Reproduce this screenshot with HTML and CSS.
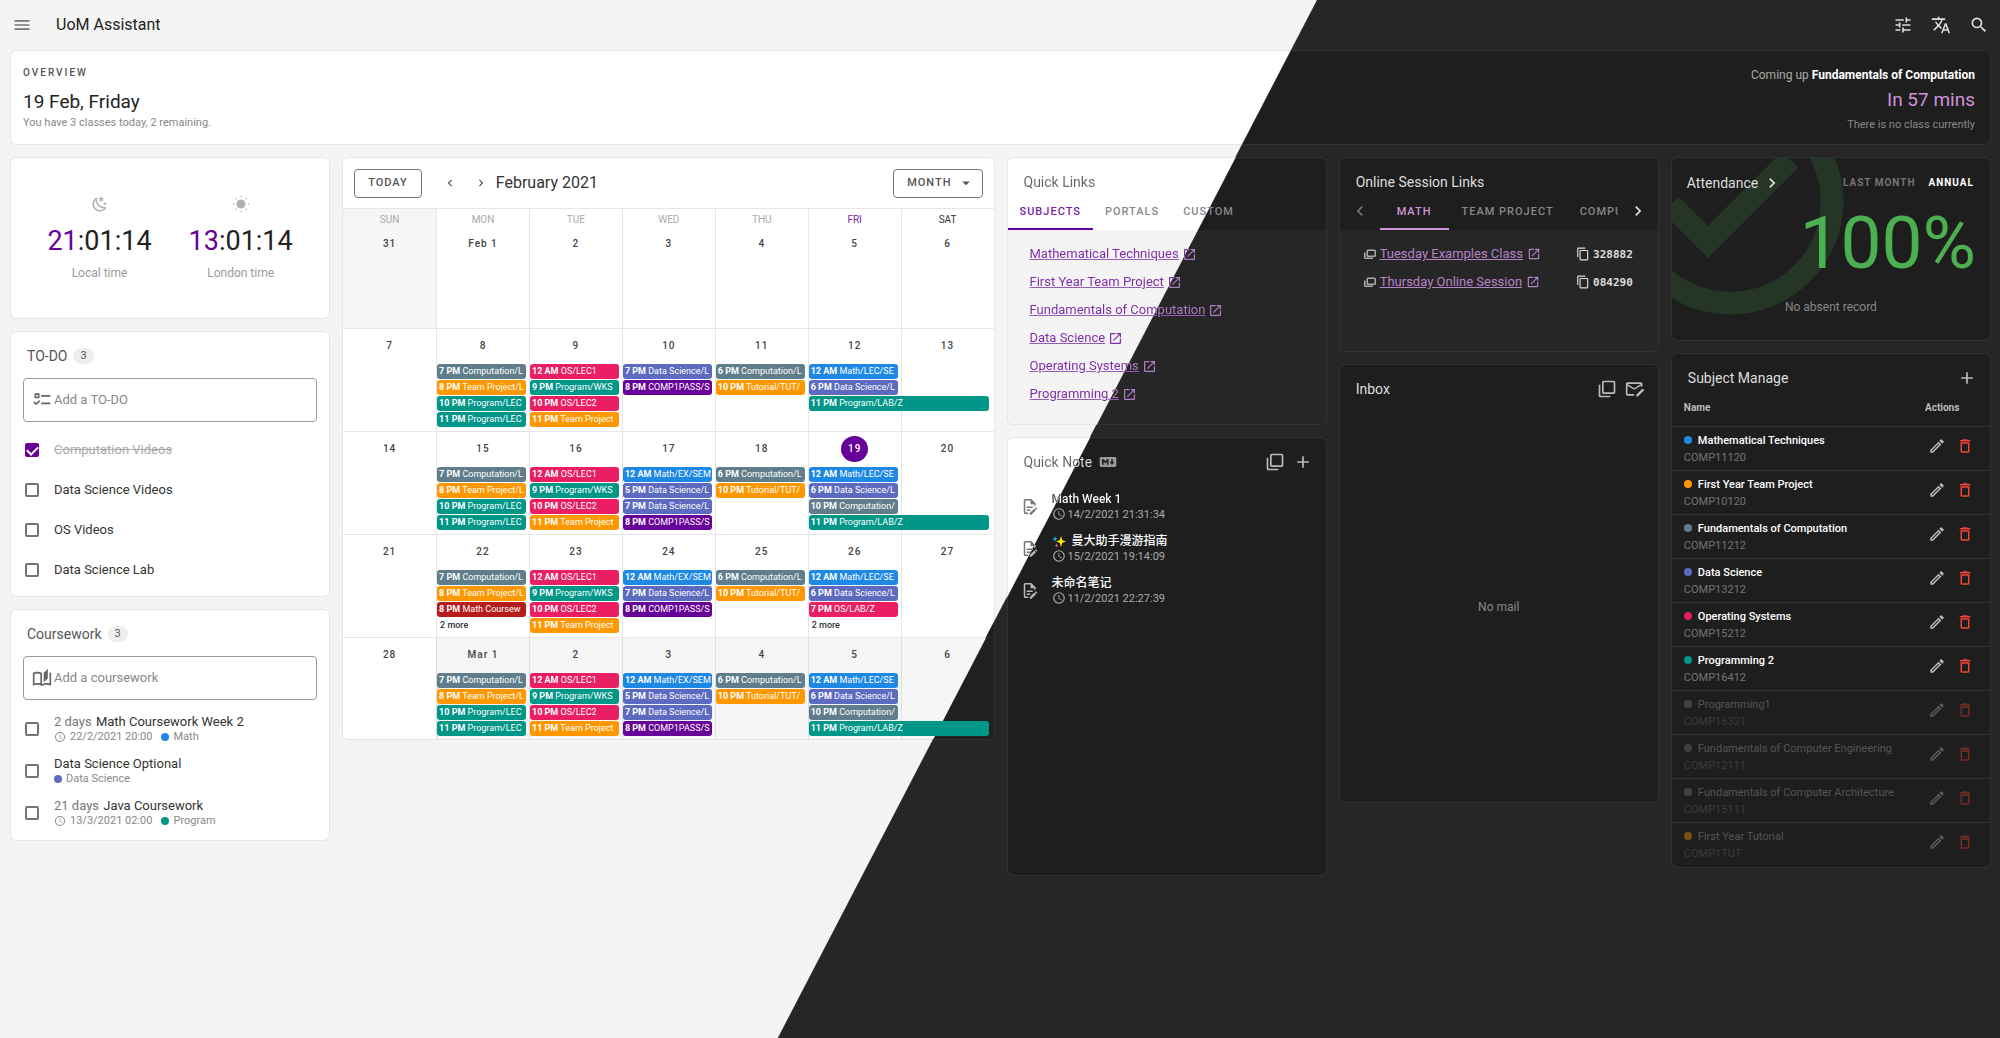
FILE: index.html
```html
<!DOCTYPE html>
<html lang="en">
<head>
<meta charset="utf-8">
<meta name="viewport" content="width=device-width, initial-scale=1">
<title>UoM Assistant</title>
<link rel="stylesheet" href="styles.css">
</head>
<body>
<svg class="sprite" aria-hidden="true">
  <symbol id="menu" viewBox="0 0 24 24"><path d="M3,6H21V8H3V6M3,11H21V13H3V11M3,16H21V18H3V16Z"/></symbol>
  <symbol id="tune" viewBox="0 0 24 24"><path d="M3,17V19H9V17H3M3,5V7H13V5H3M13,21V19H21V17H13V15H11V21H13M7,9V11H3V13H7V15H9V9H7M21,13V11H11V13H21M15,9H17V7H21V5H17V3H15V9Z"/></symbol>
  <symbol id="translate" viewBox="0 0 24 24"><path d="M12.87,15.07L10.33,12.56L10.36,12.53C12.1,10.59 13.34,8.36 14.07,6H17V4H10V2H8V4H1V6H12.17C11.5,7.92 10.44,9.75 9,11.35C8.07,10.32 7.3,9.19 6.69,8H4.69C5.42,9.63 6.42,11.17 7.67,12.56L2.58,17.58L4,19L9,14L12.11,17.11L12.87,15.07M18.5,10H16.5L12,22H14L15.12,19H19.87L21,22H23L18.5,10M15.88,17L17.5,12.67L19.12,17H15.88Z"/></symbol>
  <symbol id="magnify" viewBox="0 0 24 24"><path d="M9.5,3A6.5,6.5 0 0,1 16,9.5C16,11.11 15.41,12.59 14.44,13.73L14.71,14H15.5L20.5,19L19,20.5L14,15.5V14.71L13.73,14.44C12.59,15.41 11.11,16 9.5,16A6.5,6.5 0 0,1 3,9.5A6.5,6.5 0 0,1 9.5,3M9.5,5C7,5 5,7 5,9.5C5,12 7,14 9.5,14C12,14 14,12 14,9.5C14,7 12,5 9.5,5Z"/></symbol>
  <symbol id="night" viewBox="0 0 24 24"><path d="M17.75,4.09L15.22,6.03L16.13,9.09L13.5,7.28L10.87,9.09L11.78,6.03L9.25,4.09L12.44,4L13.5,1L14.56,4L17.75,4.09M21.25,11L19.61,12.25L20.2,14.23L18.5,13.06L16.8,14.23L17.39,12.25L15.75,11L17.81,10.95L18.5,9L19.19,10.95L21.25,11M18.97,15.95C19.8,15.87 20.69,17.05 20.16,17.8C19.84,18.25 19.5,18.67 19.08,19.07C15.17,23 8.84,23 4.94,19.07C1.03,15.17 1.03,8.83 4.94,4.93C5.34,4.53 5.76,4.17 6.21,3.85C6.96,3.32 8.14,4.21 8.06,5.04C7.79,7.9 8.75,10.87 10.95,13.06C13.14,15.26 16.1,16.22 18.97,15.95M17.33,17.97C14.5,17.81 11.7,16.64 9.53,14.5C7.36,12.31 6.2,9.5 6.04,6.68C3.23,9.82 3.34,14.64 6.35,17.66C9.37,20.67 14.19,20.78 17.33,17.97Z"/></symbol>
  <symbol id="sun" viewBox="0 0 24 24"><circle cx="12" cy="12" r="6"/><circle cx="12" cy="2" r="1"/><circle cx="12" cy="22" r="1"/><circle cx="2" cy="12" r="1"/><circle cx="22" cy="12" r="1"/><circle cx="5" cy="5" r="1"/><circle cx="19" cy="5" r="1"/><circle cx="5" cy="19" r="1"/><circle cx="19" cy="19" r="1"/></symbol>
  <symbol id="open" viewBox="0 0 24 24"><path d="M14,3V5H17.59L7.76,14.83L9.17,16.24L19,6.41V10H21V3M19,19H5V5H12V3H5C3.89,3 3,3.9 3,5V19A2,2 0 0,0 5,21H19A2,2 0 0,0 21,19V12H19V19Z"/></symbol>
  <symbol id="left" viewBox="0 0 24 24"><path d="M15.41,16.58L10.83,12L15.41,7.41L14,6L8,12L14,18L15.41,16.58Z"/></symbol>
  <symbol id="right" viewBox="0 0 24 24"><path d="M8.59,16.58L13.17,12L8.59,7.41L10,6L16,12L10,18L8.59,16.58Z"/></symbol>
  <symbol id="plus" viewBox="0 0 24 24"><path d="M19,13H13V19H11V13H5V11H11V5H13V11H19V13Z"/></symbol>
  <symbol id="down" viewBox="0 0 24 24"><path d="M7,10L12,15L17,10H7Z"/></symbol>
  <symbol id="pencil" viewBox="0 0 24 24"><path d="M14.06,9L15,9.94L5.92,19H5V18.08L14.06,9M17.66,3C17.41,3 17.15,3.1 16.96,3.29L15.13,5.12L18.88,8.87L20.71,7.04C21.1,6.65 21.1,6 20.71,5.63L18.37,3.29C18.17,3.09 17.92,3 17.66,3M14.06,6.19L3,17.25V21H6.75L17.81,9.94L14.06,6.19Z"/></symbol>
  <symbol id="trash" viewBox="0 0 24 24"><path d="M6,19A2,2 0 0,0 8,21H16A2,2 0 0,0 18,19V7H6V19M8,9H16V19H8V9M15.5,4L14.5,3H9.5L8.5,4H5V6H19V4H15.5Z"/></symbol>
  <symbol id="clock" viewBox="0 0 24 24"><path d="M12,20A8,8 0 0,0 20,12A8,8 0 0,0 12,4A8,8 0 0,0 4,12A8,8 0 0,0 12,20M12,2A10,10 0 0,1 22,12A10,10 0 0,1 12,22C6.47,22 2,17.5 2,12A10,10 0 0,1 12,2M12.5,7V12.25L17,14.92L16.25,16.15L11,13V7H12.5Z"/></symbol>
  <symbol id="copy" viewBox="0 0 24 24"><path d="M19,21H8V7H19M19,5H8A2,2 0 0,0 6,7V21A2,2 0 0,0 8,23H19A2,2 0 0,0 21,21V7A2,2 0 0,0 19,5M16,1H4A2,2 0 0,0 2,3V17H4V3H16V1Z"/></symbol>
  <symbol id="stack" viewBox="0 0 24 24"><path d="M20,16V4H8V16H20M22,16A2,2 0 0,1 20,18H8C6.89,18 6,17.1 6,16V4C6,2.89 6.89,2 8,2H20A2,2 0 0,1 22,4V16M16,20V22H4A2,2 0 0,1 2,20V7H4V20H16Z"/></symbol>
  <symbol id="session" viewBox="0 0 24 24"><path d="M8,3H21A3,3 0 0,1 24,6V15A3,3 0 0,1 21,18H8A3,3 0 0,1 5,15V6A3,3 0 0,1 8,3M8,6V15H21V6H8M0,9H3V19H18V22H3A3,3 0 0,1 0,19V9Z"/></symbol>
  <symbol id="mail-edit" viewBox="0 0 24 24"><path d="M3,4H19A2,2 0 0,1 21,6V9H19V8L11,13L3,8V18H11V20H3A2,2 0 0,1 1,18V6A2,2 0 0,1 3,4M3,6L11,11L19,6H3M21,11.5L23,13.5L15.5,21H13.5V19L21,11.5Z"/></symbol>
  <symbol id="markdown" viewBox="0 0 24 24"><path d="M20.56 18H3.44C2.65 18 2 17.37 2 16.59V7.41C2 6.63 2.65 6 3.44 6H20.56C21.35 6 22 6.63 22 7.41V16.59C22 17.37 21.35 18 20.56 18M6.81 15.19V11.53L8.73 13.88L10.65 11.53V15.19H12.58V8.81H10.65L8.73 11.16L6.81 8.81H4.89V15.19H6.81M19.69 12H17.77V8.81H15.85V12H13.92L16.81 15.28L19.69 12Z"/></symbol>
  <symbol id="todo" viewBox="0 0 24 24"><path d="M3,4H9V10H3V4M5,6V8H7V6H5M11,6H22V8H11V6M11,15H22V17H11V15M8.600,12L10,13.400L5,18.400L1.600,15L3,13.600L5,15.600L8.600,12Z"/></symbol>
  <symbol id="book" viewBox="0 0 24 24"><path d="M19 1L14 6V17L19 12.5V1M21 5V18.5C19.9 18.15 18.7 18 17.5 18C15.8 18 13.35 18.65 12 19.5V6C10.55 4.9 8.45 4.5 6.5 4.5C4.55 4.5 2.45 4.9 1 6V20.65C1 20.9 1.25 21.15 1.5 21.15C1.6 21.15 1.65 21.1 1.75 21.1C3.1 20.45 5.05 20 6.5 20C8.45 20 10.55 20.4 12 21.5C13.35 20.65 15.8 20 17.5 20C19.15 20 20.85 20.3 22.25 21.05C22.35 21.1 22.4 21.1 22.5 21.1C22.75 21.1 23 20.85 23 20.6V6C22.4 5.55 21.75 5.25 21 5M10 18.41C8.75 18.09 7.5 18 6.5 18C5.44 18 4.18 18.19 3 18.5V7.13C3.91 6.73 5.14 6.5 6.5 6.5C7.86 6.5 9.09 6.73 10 7.13V18.41Z"/></symbol>
  <symbol id="check-circle" viewBox="0 0 24 24"><path d="M12 2C6.5 2 2 6.5 2 12S6.5 22 12 22 22 17.5 22 12 17.5 2 12 2M12 20C7.59 20 4 16.41 4 12S7.59 4 12 4 20 7.59 20 12 16.41 20 12 20M16.59 7.58L10 14.17L7.41 11.59L6 13L10 17L18 9L16.59 7.58Z"/></symbol>
</svg>

<header class="appbar">
  <button class="icon-btn muted" aria-label="Menu"><svg class="ic20"><use href="#menu"/></svg></button>
  <h1>UoM Assistant</h1>
  <div class="tools">
    <button class="icon-btn" aria-label="Settings"><svg class="ic20"><use href="#tune"/></svg></button>
    <button class="icon-btn" aria-label="Language"><svg class="ic20"><use href="#translate"/></svg></button>
    <button class="icon-btn" aria-label="Search"><svg class="ic20"><use href="#magnify"/></svg></button>
  </div>
</header>

<main>
  <section class="card overview">
    <div class="today">
      <p class="overline">OVERVIEW</p>
      <h2>19 Feb, Friday</h2>
      <p class="sub">You have 3 classes today, 2 remaining.</p>
    </div>
    <div class="next">
      <p class="coming">Coming up <b>Fundamentals of Computation</b></p>
      <p class="countdown">In 57 mins</p>
      <p class="now">There is no class currently</p>
    </div>
  </section>

  <div class="board">
    <div class="col">
      <section class="card clocks">
        <div class="clock"><svg class="ic18"><use href="#night"/></svg><time><b>21</b>:01:14</time><span>Local time</span></div>
        <div class="clock"><svg class="ic18"><use href="#sun"/></svg><time><b>13</b>:01:14</time><span>London time</span></div>
      </section>

      <section class="card tasks">
        <h3>TO-DO <span class="count">3</span></h3>
        <div class="field"><svg class="ic20"><use href="#todo"/></svg><input type="text" aria-label="Add a TO-DO" placeholder="Add a TO-DO"></div>
        <label class="task done"><input type="checkbox" checked><span>Computation Videos</span></label>
        <label class="task"><input type="checkbox"><span>Data Science Videos</span></label>
        <label class="task"><input type="checkbox"><span>OS Videos</span></label>
        <label class="task"><input type="checkbox"><span>Data Science Lab</span></label>
      </section>

      <section class="card tasks works">
        <h3>Coursework <span class="count">3</span></h3>
        <div class="field"><svg class="ic20"><use href="#book"/></svg><input type="text" aria-label="Add a coursework" placeholder="Add a coursework"></div>
        <label class="work"><input type="checkbox"><span class="lines"><span><i>2 days</i> Math Coursework Week 2</span><small><svg class="ic12"><use href="#clock"/></svg>22/2/2021 20:00 <span class="dot blue"></span>Math</small></span></label>
        <label class="work"><input type="checkbox"><span class="lines"><span>Data Science Optional</span><small><span class="dot indigo first"></span>Data Science</small></span></label>
        <label class="work"><input type="checkbox"><span class="lines"><span><i>21 days</i> Java Coursework</span><small><svg class="ic12"><use href="#clock"/></svg>13/3/2021 02:00 <span class="dot teal"></span>Program</small></span></label>
      </section>
    </div>

    <div class="col wide">
      <section class="card calendar">
        <div class="calbar">
          <button class="outlined">TODAY</button>
          <button class="icon-btn nav" aria-label="Previous month"><svg class="ic14"><use href="#left"/></svg></button>
          <button class="icon-btn nav" aria-label="Next month"><svg class="ic14"><use href="#right"/></svg></button>
          <h3>February 2021</h3>
          <button class="outlined month">MONTH <svg class="ic18"><use href="#down"/></svg></button>
        </div>
        <div class="week head">
          <div class="day out"><span class="wd">SUN</span><span class="num">31</span></div>
          <div class="day"><span class="wd">MON</span><span class="num">Feb 1</span></div>
          <div class="day"><span class="wd">TUE</span><span class="num">2</span></div>
          <div class="day"><span class="wd">WED</span><span class="num">3</span></div>
          <div class="day"><span class="wd">THU</span><span class="num">4</span></div>
          <div class="day"><span class="wd current">FRI</span><span class="num">5</span></div>
          <div class="day"><span class="wd future">SAT</span><span class="num">6</span></div>
        </div>
        <div class="week">
          <div class="day"><span class="num">7</span></div>
          <div class="day"><span class="num">8</span><div class="ev grey"><b>7 PM</b> Computation/L</div><div class="ev orange"><b>8 PM</b> Team Project/L</div><div class="ev teal"><b>10 PM</b> Program/LEC</div><div class="ev teal"><b>11 PM</b> Program/LEC</div></div>
          <div class="day"><span class="num">9</span><div class="ev pink"><b>12 AM</b> OS/LEC1</div><div class="ev teal"><b>9 PM</b> Program/WKS</div><div class="ev pink"><b>10 PM</b> OS/LEC2</div><div class="ev orange"><b>11 PM</b> Team Project</div></div>
          <div class="day"><span class="num">10</span><div class="ev indigo"><b>7 PM</b> Data Science/L</div><div class="ev purple"><b>8 PM</b> COMP1PASS/S</div></div>
          <div class="day"><span class="num">11</span><div class="ev grey"><b>6 PM</b> Computation/L</div><div class="ev orange"><b>10 PM</b> Tutorial/TUT/</div></div>
          <div class="day"><span class="num">12</span><div class="ev blue"><b>12 AM</b> Math/LEC/SE</div><div class="ev indigo"><b>6 PM</b> Data Science/L</div><div class="ev teal two"><b>11 PM</b> Program/LAB/Z</div></div>
          <div class="day"><span class="num">13</span></div>
        </div>
        <div class="week">
          <div class="day"><span class="num">14</span></div>
          <div class="day"><span class="num">15</span><div class="ev grey"><b>7 PM</b> Computation/L</div><div class="ev orange"><b>8 PM</b> Team Project/L</div><div class="ev teal"><b>10 PM</b> Program/LEC</div><div class="ev teal"><b>11 PM</b> Program/LEC</div></div>
          <div class="day"><span class="num">16</span><div class="ev pink"><b>12 AM</b> OS/LEC1</div><div class="ev teal"><b>9 PM</b> Program/WKS</div><div class="ev pink"><b>10 PM</b> OS/LEC2</div><div class="ev orange"><b>11 PM</b> Team Project</div></div>
          <div class="day"><span class="num">17</span><div class="ev blue"><b>12 AM</b> Math/EX/SEM</div><div class="ev indigo"><b>5 PM</b> Data Science/L</div><div class="ev indigo"><b>7 PM</b> Data Science/L</div><div class="ev purple"><b>8 PM</b> COMP1PASS/S</div></div>
          <div class="day"><span class="num">18</span><div class="ev grey"><b>6 PM</b> Computation/L</div><div class="ev orange"><b>10 PM</b> Tutorial/TUT/</div></div>
          <div class="day"><span class="num active">19</span><div class="ev blue"><b>12 AM</b> Math/LEC/SE</div><div class="ev indigo"><b>6 PM</b> Data Science/L</div><div class="ev grey"><b>10 PM</b> Computation/</div><div class="ev teal two"><b>11 PM</b> Program/LAB/Z</div></div>
          <div class="day"><span class="num">20</span></div>
        </div>
        <div class="week">
          <div class="day"><span class="num">21</span></div>
          <div class="day"><span class="num">22</span><div class="ev grey"><b>7 PM</b> Computation/L</div><div class="ev orange"><b>8 PM</b> Team Project/L</div><div class="ev red"><b>8 PM</b> Math Coursew</div><div class="more">2 more</div></div>
          <div class="day"><span class="num">23</span><div class="ev pink"><b>12 AM</b> OS/LEC1</div><div class="ev teal"><b>9 PM</b> Program/WKS</div><div class="ev pink"><b>10 PM</b> OS/LEC2</div><div class="ev orange"><b>11 PM</b> Team Project</div></div>
          <div class="day"><span class="num">24</span><div class="ev blue"><b>12 AM</b> Math/EX/SEM</div><div class="ev indigo"><b>7 PM</b> Data Science/L</div><div class="ev purple"><b>8 PM</b> COMP1PASS/S</div></div>
          <div class="day"><span class="num">25</span><div class="ev grey"><b>6 PM</b> Computation/L</div><div class="ev orange"><b>10 PM</b> Tutorial/TUT/</div></div>
          <div class="day"><span class="num">26</span><div class="ev blue"><b>12 AM</b> Math/LEC/SE</div><div class="ev indigo"><b>6 PM</b> Data Science/L</div><div class="ev pink"><b>7 PM</b> OS/LAB/Z</div><div class="more">2 more</div></div>
          <div class="day"><span class="num">27</span></div>
        </div>
        <div class="week">
          <div class="day"><span class="num">28</span></div>
          <div class="day out"><span class="num">Mar 1</span><div class="ev grey"><b>7 PM</b> Computation/L</div><div class="ev orange"><b>8 PM</b> Team Project/L</div><div class="ev teal"><b>10 PM</b> Program/LEC</div><div class="ev teal"><b>11 PM</b> Program/LEC</div></div>
          <div class="day out"><span class="num">2</span><div class="ev pink"><b>12 AM</b> OS/LEC1</div><div class="ev teal"><b>9 PM</b> Program/WKS</div><div class="ev pink"><b>10 PM</b> OS/LEC2</div><div class="ev orange"><b>11 PM</b> Team Project</div></div>
          <div class="day out"><span class="num">3</span><div class="ev blue"><b>12 AM</b> Math/EX/SEM</div><div class="ev indigo"><b>5 PM</b> Data Science/L</div><div class="ev indigo"><b>7 PM</b> Data Science/L</div><div class="ev purple"><b>8 PM</b> COMP1PASS/S</div></div>
          <div class="day out"><span class="num">4</span><div class="ev grey"><b>6 PM</b> Computation/L</div><div class="ev orange"><b>10 PM</b> Tutorial/TUT/</div></div>
          <div class="day out"><span class="num">5</span><div class="ev blue"><b>12 AM</b> Math/LEC/SE</div><div class="ev indigo"><b>6 PM</b> Data Science/L</div><div class="ev grey"><b>10 PM</b> Computation/</div><div class="ev teal two"><b>11 PM</b> Program/LAB/Z</div></div>
          <div class="day out"><span class="num">6</span></div>
        </div>
      </section>
    </div>

    <div class="col">
      <section class="card links">
        <h3 class="title"><span class="split-title">Quick Links</span></h3>
        <div class="tabs">
          <button class="tab selected light">SUBJECTS</button>
          <button class="tab">PORTALS</button>
          <button class="tab">CUSTOM</button>
        </div>
        <ul class="panel">
          <li><a href="#mathematical"><span>Mathematical Techniques</span></a><i class="open-icon"></i></li>
          <li><a href="#team-project"><span>First Year Team Project</span></a><i class="open-icon"></i></li>
          <li><a href="#computation"><span>Fundamentals of Computation</span></a><i class="open-icon"></i></li>
          <li><a href="#data-science"><span>Data Science</span></a><i class="open-icon"></i></li>
          <li><a href="#systems"><span>Operating Systems</span></a><i class="open-icon"></i></li>
          <li><a href="#programming"><span>Programming 2</span></a><i class="open-icon"></i></li>
        </ul>
      </section>

      <section class="card notes">
        <div class="cardbar">
          <h3><span class="split-title">Quick Note</span></h3><svg class="ic20 md"><use href="#markdown"/></svg>
          <button class="icon-btn" aria-label="Open notes"><svg class="ic20"><use href="#stack"/></svg></button>
          <button class="icon-btn" aria-label="Add note"><svg class="ic20"><use href="#plus"/></svg></button>
        </div>
        <div class="note"><i class="note-icon"></i><div><p class="split-strong">Math Week 1</p><small><svg class="ic14"><use href="#clock"/></svg>14/2/2021 21:31:34</small></div></div>
        <div class="note"><i class="note-icon"></i><div><p><svg class="sparkles" viewBox="0 0 14 14"><path fill="#ffeb00" d="M9 2L10.300 6.200L14 7.500L10.300 8.800L9 13L7.700 8.800L4 7.500L7.700 6.200Z"/><path fill="#22b8e6" d="M3 2L3.700 4.300L6 5L3.700 5.700L3 8L2.300 5.700L0 5L2.300 4.300Z"/><path fill="#e55a9b" d="M4.500 9.500L5.100 11L6.500 11.500L5.100 12L4.500 13.500L3.900 12L2.500 11.500L3.900 11Z"/></svg> 曼大助手漫游指南</p><small><svg class="ic14"><use href="#clock"/></svg>15/2/2021 19:14:09</small></div></div>
        <div class="note"><i class="note-icon"></i><div><p>未命名笔记</p><small><svg class="ic14"><use href="#clock"/></svg>11/2/2021 22:27:39</small></div></div>
      </section>
    </div>

    <div class="col">
      <section class="card sessions">
        <h3 class="title">Online Session Links</h3>
        <div class="tabs slider">
          <button class="icon-btn muted" aria-label="Previous tabs"><svg class="ic20"><use href="#left"/></svg></button>
          <div class="strip">
            <button class="tab selected">MATH</button>
            <button class="tab">TEAM PROJECT</button>
            <button class="tab">COMPU</button>
          </div>
          <button class="icon-btn bright" aria-label="Next tabs"><svg class="ic20"><use href="#right"/></svg></button>
        </div>
        <ul class="panel">
          <li><svg class="ic12 lead"><use href="#session"/></svg><a href="#tuesday">Tuesday Examples Class</a><svg class="ic14 ext"><use href="#open"/></svg><span class="code"><svg class="ic14"><use href="#copy"/></svg>328882</span></li>
          <li><svg class="ic12 lead"><use href="#session"/></svg><a href="#thursday">Thursday Online Session</a><svg class="ic14 ext"><use href="#open"/></svg><span class="code"><svg class="ic14"><use href="#copy"/></svg>084290</span></li>
        </ul>
      </section>

      <section class="card inbox">
        <div class="cardbar">
          <h3>Inbox</h3>
          <button class="icon-btn" aria-label="Open inbox"><svg class="ic20"><use href="#stack"/></svg></button>
          <button class="icon-btn" aria-label="Compose"><svg class="ic20"><use href="#mail-edit"/></svg></button>
        </div>
        <p class="empty">No mail</p>
      </section>
    </div>

    <div class="col">
      <section class="card attendance">
        <svg class="backdrop"><use href="#check-circle"/></svg>
        <div class="attbar">
          <h3>Attendance</h3><svg class="ic20"><use href="#right"/></svg>
          <button class="range">LAST MONTH</button>
          <button class="range on">ANNUAL</button>
        </div>
        <p class="percent">100%</p>
        <p class="absent">No absent record</p>
      </section>

      <section class="card subjects">
        <div class="cardbar">
          <h3>Subject Manage</h3>
          <button class="icon-btn" aria-label="Add subject"><svg class="ic20"><use href="#plus"/></svg></button>
        </div>
        <table>
          <thead><tr><th>Name</th><th class="acts">Actions</th></tr></thead>
          <tbody>
            <tr><td><span class="dot blue"></span>Mathematical Techniques<small>COMP11120</small></td><td class="acts"><button aria-label="Edit"><svg class="ic18"><use href="#pencil"/></svg></button><button class="del" aria-label="Delete"><svg class="ic18"><use href="#trash"/></svg></button></td></tr>
            <tr><td><span class="dot orange"></span>First Year Team Project<small>COMP10120</small></td><td class="acts"><button aria-label="Edit"><svg class="ic18"><use href="#pencil"/></svg></button><button class="del" aria-label="Delete"><svg class="ic18"><use href="#trash"/></svg></button></td></tr>
            <tr><td><span class="dot grey"></span>Fundamentals of Computation<small>COMP11212</small></td><td class="acts"><button aria-label="Edit"><svg class="ic18"><use href="#pencil"/></svg></button><button class="del" aria-label="Delete"><svg class="ic18"><use href="#trash"/></svg></button></td></tr>
            <tr><td><span class="dot indigo"></span>Data Science<small>COMP13212</small></td><td class="acts"><button aria-label="Edit"><svg class="ic18"><use href="#pencil"/></svg></button><button class="del" aria-label="Delete"><svg class="ic18"><use href="#trash"/></svg></button></td></tr>
            <tr><td><span class="dot pink"></span>Operating Systems<small>COMP15212</small></td><td class="acts"><button aria-label="Edit"><svg class="ic18"><use href="#pencil"/></svg></button><button class="del" aria-label="Delete"><svg class="ic18"><use href="#trash"/></svg></button></td></tr>
            <tr><td><span class="dot teal"></span>Programming 2<small>COMP16412</small></td><td class="acts"><button aria-label="Edit"><svg class="ic18"><use href="#pencil"/></svg></button><button class="del" aria-label="Delete"><svg class="ic18"><use href="#trash"/></svg></button></td></tr>
            <tr class="off"><td><span class="dot none"></span>Programming1<small>COMP16321</small></td><td class="acts"><button aria-label="Edit"><svg class="ic18"><use href="#pencil"/></svg></button><button class="del" aria-label="Delete"><svg class="ic18"><use href="#trash"/></svg></button></td></tr>
            <tr class="off"><td><span class="dot none"></span>Fundamentals of Computer Engineering<small>COMP12111</small></td><td class="acts"><button aria-label="Edit"><svg class="ic18"><use href="#pencil"/></svg></button><button class="del" aria-label="Delete"><svg class="ic18"><use href="#trash"/></svg></button></td></tr>
            <tr class="off"><td><span class="dot none"></span>Fundamentals of Computer Architecture<small>COMP15111</small></td><td class="acts"><button aria-label="Edit"><svg class="ic18"><use href="#pencil"/></svg></button><button class="del" aria-label="Delete"><svg class="ic18"><use href="#trash"/></svg></button></td></tr>
            <tr class="off"><td><span class="dot orange"></span>First Year Tutorial<small>COMP1TUT</small></td><td class="acts"><button aria-label="Edit"><svg class="ic18"><use href="#pencil"/></svg></button><button class="del" aria-label="Delete"><svg class="ic18"><use href="#trash"/></svg></button></td></tr>
          </tbody>
        </table>
      </section>
    </div>
  </div>
</main>
</body>
</html>
```
FILE: styles.css
```css
/* Light and dark themes meet on one diagonal. Every themed surface paints the
   same viewport-fixed gradient, so the edge lines up across the page. */
:root {
  --angle: 117.450deg;
  --a: 51.840%;
  --b: 51.890%;
  --line: rgba(128, 128, 128, .2);
  --page: linear-gradient(var(--angle), #f4f4f4 var(--a), #262626 var(--b));
  --surface: linear-gradient(var(--angle), #fff var(--a), #1e1e1e var(--b));
  --outside: linear-gradient(var(--angle), #f6f6f6 var(--a), #202020 var(--b));
  --title: linear-gradient(var(--angle), #666 var(--a), #ddd var(--b));
  --strong: linear-gradient(var(--angle), #555 var(--a), #fff var(--b));
  --link: linear-gradient(var(--angle), #7d2ba8 var(--a), #b07cc6 var(--b));
  --glyph: linear-gradient(var(--angle), #757575 var(--a), #bbb var(--b));
}

* { box-sizing: border-box; }

body {
  margin: 0;
  min-height: 100vh;
  font: 13px/20px Roboto, "Noto Sans CJK SC", sans-serif;
  color: #333;
  background: var(--page) fixed;
}

h1, h2, h3, p, ul { margin: 0; padding: 0; font-weight: 400; }
ul { list-style: none; }
svg { display: block; flex: none; fill: currentColor; }
button { padding: 0; border: 0; background: none; font: inherit; color: inherit; cursor: pointer; }
input { margin: 0; font: inherit; }
small { font-size: 11px; }
i { font-style: normal; }

.sprite { position: absolute; width: 0; height: 0; }
.ic12 { width: 12px; height: 12px; }
.ic14 { width: 14px; height: 14px; }
.ic18 { width: 18px; height: 18px; }
.ic20 { width: 20px; height: 20px; }

.appbar { display: flex; align-items: center; height: 50px; padding: 0 11px 0 12px; }
.appbar h1 { margin-left: 24px; font-size: 16px; color: #222; }
.tools { display: flex; gap: 18px; margin-left: auto; color: #ddd; }
.icon-btn { display: grid; place-items: center; }
.muted { color: #757575; }
.bright { color: #ddd; }

main { padding: 0 9px 0 10px; }
.card {
  position: relative;
  overflow: hidden;
  border: 1px solid var(--line);
  border-radius: 6px;
  background: var(--surface) fixed;
}

.overview { display: flex; justify-content: space-between; height: 95px; padding: 12px 15px 0 12px; }
.overline { font-size: 10px; font-weight: 500; letter-spacing: 2px; color: #555; }
.overview h2 { margin-top: 6px; font-size: 19px; line-height: 26px; color: #222; }
.sub { font-size: 11px; line-height: 15px; color: #888; }
.next { text-align: right; }
.coming { line-height: 24px; font-size: 12px; color: #aaa; }
.coming b { font-weight: 700; color: #fff; }
.countdown { font-size: 19px; line-height: 26px; color: #ce93d8; }
.now { font-size: 11px; line-height: 23px; color: #888; }

.board { display: grid; grid-template-columns: repeat(6, minmax(0, 1fr)); gap: 12px; margin-top: 12px; align-items: start; }
.col { display: grid; gap: 12px; }
.wide { grid-column: span 2; }

.clocks { display: flex; justify-content: center; gap: 37px; height: 162px; padding-top: 37px; }
.clock { display: flex; flex-direction: column; align-items: center; color: #b0b0b0; }
.clock time { margin: 10px 0 7px; font-size: 27px; line-height: 36px; color: #222; }
.clock time b { font-weight: 400; color: #609; }
.clock span { font-size: 12px; line-height: 14px; color: #9a9a9a; }

.tasks { padding: 12px 12px 6px; }
.tasks h3 { display: flex; align-items: center; gap: 6px; padding-left: 4px; font-size: 14px; line-height: 24px; color: #555; }
.count { padding: 0 7px; border-radius: 8px; background: #eee; font-size: 11px; line-height: 16px; }
.field { display: flex; align-items: center; height: 44px; margin: 10px 0 8px; padding: 0 8px; border: 1px solid #999; border-radius: 4px; color: #666; }
.field input { flex: 1; min-width: 0; margin-left: 2px; padding: 0; border: 0; outline: 0; background: none; }
.field input::placeholder { color: #888; opacity: 1; }
.task, .work { display: flex; align-items: center; }
.task { height: 40px; }
.task input, .work input {
  appearance: none;
  display: grid;
  place-items: center;
  width: 14px;
  height: 14px;
  margin: 0 15px 0 2px;
  border: 2px solid #757575;
  border-radius: 2px;
}
.task input:checked { border-color: #609; background: #609; }
.task input:checked::after { content: ""; width: 9px; height: 5px; border: solid #fff; border-width: 0 0 2px 2px; rotate: -45deg; translate: 0 -1px; }
.task.done span { color: #aaa; text-decoration: line-through; }
.work { height: 42px; }
.lines { display: grid; line-height: 16px; }
.lines i { margin-right: 1px; color: #777; }
.work small { display: flex; align-items: center; gap: 4px; line-height: 14px; color: #888; }
.dot { display: inline-block; flex: none; width: 8px; height: 8px; border-radius: 50%; }
.work .dot { margin-left: 5px; }
.work .dot.first { margin-left: 0; }

.blue { background: #1e88e5; }
.orange { background: #ff9800; }
.grey { background: #607d8b; }
.indigo { background: #5c6bc0; }
.pink { background: #e91e63; }
.teal { background: #009688; }
.purple { background: #609; }
.red { background: #b71c1c; }
.none { background: #757575; }

.calbar { display: flex; align-items: center; height: 50px; padding: 0 11px; color: #555; }
.calbar h3 { margin-left: 8px; font-size: 16px; color: #333; }
.outlined { display: flex; align-items: center; height: 29px; padding: 0 13px; border: 1px solid #757575; border-radius: 4px; font-size: 11px; font-weight: 500; letter-spacing: 1px; }
.outlined + .nav { margin-left: 21px; }
.nav + .nav { margin-left: 17px; }
.month { gap: 5px; margin-left: auto; padding-right: 7px; }
.week { display: grid; grid-template-columns: repeat(7, minmax(0, 1fr)); height: 103px; border-top: 1px solid var(--line); }
.week:last-child { height: 102px; }
.week.head { height: 120px; }
.day { display: flex; flex-direction: column; min-width: 0; border-left: 1px solid var(--line); }
.day:first-child { border-left: 0; }
.out { background: var(--outside) fixed; }
.wd { height: 18px; line-height: 21px; text-align: center; font-size: 10px; color: #aaa; }
.wd.current { color: #7b1fa2; }
.wd.future { color: #333; }
.num { align-self: center; height: 26px; margin: 4px 0 5px; line-height: 26px; text-align: center; font-size: 10px; letter-spacing: 1px; font-weight: 500; color: #444; }
.active { width: 27px; border-radius: 50%; background: #609; color: #fff; }
.ev { flex: none; width: calc(100% - 3px); height: 15px; margin-bottom: 1px; padding-left: 2px; overflow: hidden; border-radius: 3px; font-size: 9px; line-height: 15px; white-space: nowrap; color: #fff; }
.ev b { font-weight: 700; }
.two { position: relative; z-index: 1; width: calc(200% - 4px); }
.more { padding-left: 3px; font-size: 9px; line-height: 15px; font-weight: 500; color: #333; }

.title { padding: 14px 16px 0; font-size: 14px; line-height: 20px; color: #ddd; }
.split-title, .split-strong, .links a span { background-attachment: fixed; -webkit-background-clip: text; background-clip: text; color: transparent; }
.split-title { background-image: var(--title); }
.split-strong { background-image: var(--strong); }
.tabs { display: flex; height: 38px; }
.tab { padding: 2px 12px 0; font-size: 11px; font-weight: 500; letter-spacing: 1px; color: #888; white-space: nowrap; }
.tab.selected { color: #ce93d8; box-shadow: inset 0 -2px #ce93d8; }
.tab.selected.light { color: #7b1fa2; box-shadow: inset 0 -2px #609; }
.panel { background: var(--page) fixed; }
.panel li { display: flex; align-items: center; height: 28px; }
.links .panel { height: 194px; padding: 10px 22px 0; }
.links a { color: #8e44ad; text-decoration-color: #9a5ab8; }
.links a span { background-image: var(--link); }
.open-icon { width: 11px; height: 11px; margin-left: 5px; background: var(--link) fixed; mask: url("data:image/svg+xml,%3Csvg xmlns='http://www.w3.org/2000/svg' viewBox='3 3 18 18'%3E%3Cpath d='M14,3V5H17.59L7.76,14.83L9.17,16.24L19,6.41V10H21V3M19,19H5V5H12V3H5C3.89,3 3,3.9 3,5V19A2,2 0 0,0 5,21H19A2,2 0 0,0 21,19V12H19V19Z'/%3E%3C/svg%3E") center / contain no-repeat; }

.cardbar { display: flex; align-items: center; height: 48px; padding: 0 13px 0 16px; color: #bbb; }
.cardbar h3 { margin-right: auto; font-size: 14px; color: #ddd; }
.cardbar .icon-btn { margin-left: 8px; }
.notes { height: 439px; }
.notes .cardbar { height: 47px; }
.notes .cardbar h3 { margin-right: 6px; }
.md { margin-right: auto; color: #999; }
.note { display: flex; align-items: center; gap: 13px; height: 42px; padding-left: 15px; color: #fff; }
.note-icon { width: 16px; height: 17px; background: var(--glyph) fixed; mask: url("data:image/svg+xml,%3Csvg xmlns='http://www.w3.org/2000/svg' viewBox='3 1 20 22'%3E%3Cpath d='M8,12H16V14H8V12M10,20H6V4H13V9H18V12.1L20,10.1V8L14,2H6A2,2 0 0,0 4,4V20A2,2 0 0,0 6,22H10V20M8,18H12.1L13,17.1V16H8V18M20.2,13C20.3,13 20.5,13.1 20.6,13.2L21.9,14.5C22.1,14.7 22.1,15.1 21.9,15.3L20.9,16.3L18.8,14.2L19.8,13.2C19.9,13.1 20,13 20.2,13M20.2,16.9L14.1,23H12V20.9L18.1,14.8L20.2,16.9Z'/%3E%3C/svg%3E") center / contain no-repeat; }
.note p { display: flex; align-items: center; gap: 6px; font-size: 12px; font-weight: 500; line-height: 16px; }
.note small { display: flex; align-items: center; gap: 2px; line-height: 15px; color: #aaa; }
.sparkles { width: 14px; height: 14px; }

.slider .icon-btn { flex: none; width: 40px; }
.strip { display: flex; flex: 1; overflow: hidden; }
.strip .tab { padding: 2px 13px 0; }
.strip .tab:first-child { padding: 2px 17px 0; }
.sessions .panel { height: 121px; padding: 10px 25px 0 24px; }
.sessions a, .ext { color: #b583c8; }
.lead { margin-right: 4px; color: #aaa; }
.ext { margin-left: 4px; }
.code { display: flex; align-items: center; gap: 3px; margin-left: auto; color: #ddd; font: 700 11px "DejaVu Sans Mono", monospace; }
.inbox { height: 439px; }
.empty { padding-top: 184px; text-align: center; font-size: 12px; color: #888; }

.attendance { height: 184px; }
.backdrop { position: absolute; left: -77px; top: -92px; width: 271px; height: 271px; color: #4caf50; opacity: .16; }
.attbar, .percent, .absent { position: relative; }
.attbar { display: flex; align-items: center; height: 50px; padding: 0 16px 0 15px; color: #ddd; }
.attbar h3 { margin-right: 4px; font-size: 14px; }
.range { margin-left: 13px; font-size: 10px; font-weight: 700; letter-spacing: 1px; color: #757575; }
.attbar svg { margin-right: auto; }
.range.on { color: #fff; }
.percent { padding-right: 14px; text-align: right; font-size: 73px; line-height: 70px; color: #4caf50; }
.absent { margin-top: 19px; text-align: center; font-size: 12px; color: #888; }

.subjects table { width: 100%; table-layout: fixed; border-collapse: collapse; font-size: 11px; }
.subjects th { height: 24px; padding: 1px 12px 13px; text-align: left; font-size: 10px; line-height: 10px; color: #bbb; }
.subjects td { height: 44px; padding: 0 12px; border-top: 1px solid var(--line); line-height: 17px; color: #fff; font-weight: 500; white-space: nowrap; }
.subjects td .dot { margin-right: 6px; }
.subjects small { display: block; font-weight: 400; color: #757575; }
.subjects .acts { width: 65px; padding: 0; }
.subjects th.acts { padding: 1px 0 13px; }
.acts button { margin-left: 3px; color: #bbb; }
.acts button + button { margin-left: 10px; }
.acts .del { color: #f44336; }
.off .dot, .off button { opacity: .4; }
.subjects .off td { color: #555; font-weight: 400; }
.subjects .off small { color: #3c3c3c; }
```
